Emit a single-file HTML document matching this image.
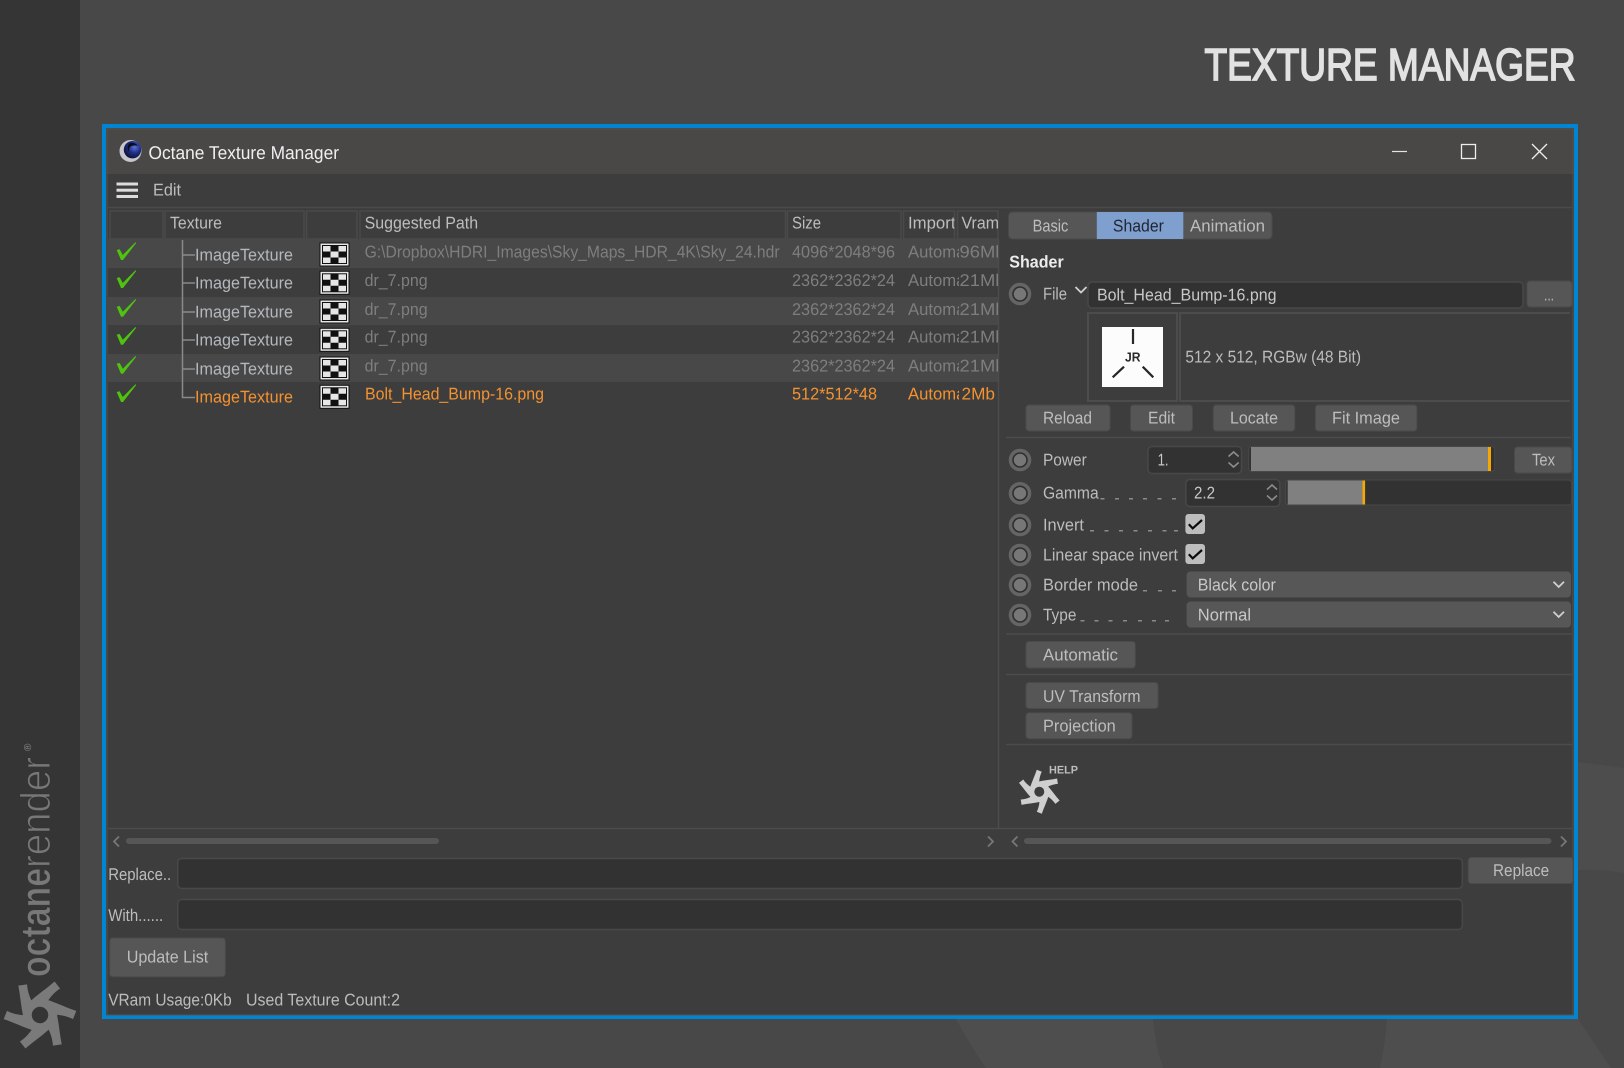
<!DOCTYPE html>
<html><head><meta charset="utf-8"><title>Texture Manager</title>
<style>
html,body{margin:0;padding:0;width:1624px;height:1068px;overflow:hidden;background:#484848}
svg{display:block}
text{font-family:"Liberation Sans",sans-serif;font-size:17px;fill:#bdbdbd;text-rendering:geometricPrecision}
text:not([transform]){transform:translateY(-.7px)}
.g{fill:#7e7e7e}.o{fill:#f39230}.it{fill:#b3b8bd}.l{fill:#bcbcbc}.w{fill:#c8c8c8}
.btn{fill:#565656;stroke:#4a4a4a;stroke-width:1}
.inp{fill:#323232;stroke:#484848;stroke-width:1.5}
.hc{fill:#3d3d3d;stroke:#4a4a4a;stroke-width:1.5}
.ln{fill:none;stroke:#4c4c4c;stroke-width:2}
.ch{fill:none;stroke:#8c8c8c;stroke-width:1.6}
.chw{fill:none;stroke:#d0d0d0;stroke-width:1.8}
.dot{fill:#8a8a8a}
</style></head>
<body>
<svg width="1624" height="1068" viewBox="0 0 1624 1068" xmlns="http://www.w3.org/2000/svg">
<defs>
<clipPath id="ch"><rect x="906" y="205" width="48.5" height="35"/></clipPath>
<clipPath id="ci"><rect x="906" y="240" width="53" height="170"/></clipPath>
<clipPath id="cv"><rect x="959" y="240" width="39" height="170"/></clipPath>
<radialGradient id="sph" cx="0.62" cy="0.35" r="0.7"><stop offset="0" stop-color="#5a74d8"/><stop offset="0.5" stop-color="#1f2d86"/><stop offset="1" stop-color="#0c1030"/></radialGradient>
</defs>
<!-- background -->
<rect width="1624" height="1068" fill="#484848"/>
<rect width="80" height="1068" fill="#353535"/>
<path d="M1578 762L1624 768V873Q1600 869 1578 870Z" fill="#4d4d4d"/>
<path d="M956 1019Q970 1045 986 1068H1163Q1155 1045 1153 1019Z" fill="#4e4e4e"/>
<path d="M1387 1019Q1385 1045 1380 1068H1611L1578 1019Z" fill="#4e4e4e"/>
<!-- sidebar logo -->
<g fill="#7a7a7a" transform="translate(40,1015) scale(1.65) rotate(30)">
<circle r="9.4"/>
<path d="M-9.5-3.5C-7.5-10-4.5-16-2.5-22L2.5-20C.5-16-.5-11 0-7Z"/>
<path d="M-9.5-3.5C-7.5-10-4.5-16-2.5-22L2.5-20C.5-16-.5-11 0-7Z" transform="rotate(60)"/>
<path d="M-9.5-3.5C-7.5-10-4.5-16-2.5-22L2.5-20C.5-16-.5-11 0-7Z" transform="rotate(120)"/>
<path d="M-9.5-3.5C-7.5-10-4.5-16-2.5-22L2.5-20C.5-16-.5-11 0-7Z" transform="rotate(180)"/>
<path d="M-9.5-3.5C-7.5-10-4.5-16-2.5-22L2.5-20C.5-16-.5-11 0-7Z" transform="rotate(240)"/>
<path d="M-9.5-3.5C-7.5-10-4.5-16-2.5-22L2.5-20C.5-16-.5-11 0-7Z" transform="rotate(300)"/>
<circle r="5" fill="#353535"/>
</g>
<text transform="translate(50,977) rotate(-90)" textLength="109" lengthAdjust="spacingAndGlyphs" style="font-size:42px;font-weight:bold;fill:#787878;stroke:#353535;stroke-width:.7">octane</text>
<text transform="translate(50,868) rotate(-90)" textLength="111" lengthAdjust="spacingAndGlyphs" style="font-size:42px;fill:#777;stroke:#353535;stroke-width:1">render</text>
<text transform="translate(31,751) rotate(-90)" style="font-size:10px;fill:#888">®</text>
<!-- heading -->
<text x="1204.5" y="80.7" textLength="371" lengthAdjust="spacingAndGlyphs" style="font-size:45px;fill:#e2e2e2;stroke:#e2e2e2;stroke-width:1.7">TEXTURE MANAGER</text>
<!-- window -->
<rect x="104" y="126" width="1472" height="891" fill="#3d3d3d" stroke="#0085d3" stroke-width="4"/>
<rect x="106" y="128" width="1468" height="46" fill="#4a4846"/>
<path d="M107 129H1573V1015H107Z" fill="none" stroke="#525252" stroke-width="1"/>
<!-- title icon -->
<circle cx="130.5" cy="151" r="11" fill="#c6c6cc"/>
<circle cx="132.5" cy="149.7" r="8.7" fill="url(#sph)"/>
<path d="M129 143.5Q135 141.5 138 146Q134 144.5 130.5 146.5Q128 149 129.5 152.5Q126 148 129 143.5Z" fill="#0a0c20"/>
<text x="148.5" y="159.7" textLength="190.5" lengthAdjust="spacingAndGlyphs" style="font-size:18.5px;fill:#efefef">Octane Texture Manager</text>
<!-- window controls -->
<path d="M1392 151.5H1407" stroke="#e4e4e4" stroke-width="1.2" fill="none"/>
<rect x="1461.5" y="144.5" width="14" height="14" fill="none" stroke="#eee" stroke-width="1.3"/>
<path d="M1532 144L1547 159M1547 144L1532 159" stroke="#eee" stroke-width="1.3" fill="none"/>
<!-- menu -->
<rect x="116.5" y="182.5" width="21.5" height="3" fill="#dcdcdc"/>
<rect x="116.5" y="188.7" width="21.5" height="3" fill="#dcdcdc"/>
<rect x="116.5" y="195" width="21.5" height="3" fill="#dcdcdc"/>
<text x="153" y="196" textLength="28" lengthAdjust="spacingAndGlyphs">Edit</text>
<path d="M107 207.5H1573" stroke="#4a4a4a" stroke-width="1.5"/>
<!-- header -->
<rect x="110" y="211" width="53" height="28" class="hc"/>
<rect x="165" y="211" width="139" height="28" class="hc"/>
<rect x="306.5" y="211" width="50.5" height="28" class="hc"/>
<rect x="360" y="211" width="425.5" height="28" class="hc"/>
<rect x="787.5" y="211" width="113.5" height="28" class="hc"/>
<rect x="903.5" y="211" width="51" height="28" class="hc"/>
<rect x="957.5" y="211" width="40.5" height="28" class="hc"/>
<text x="170" y="229" textLength="52" lengthAdjust="spacingAndGlyphs">Texture</text>
<text x="364.6" y="229" textLength="113.5" lengthAdjust="spacingAndGlyphs">Suggested Path</text>
<text x="792" y="229" textLength="29" lengthAdjust="spacingAndGlyphs">Size</text>
<g clip-path="url(#ch)"><text x="908" y="229" textLength="47.5" lengthAdjust="spacingAndGlyphs">Import</text></g>
<text x="961.5" y="229" textLength="37.5" lengthAdjust="spacingAndGlyphs">Vram</text>
<!-- rows -->
<rect x="108" y="239" width="890" height="29" fill="#484848"/>
<rect x="108" y="297" width="890" height="28" fill="#484848"/>
<rect x="108" y="354" width="890" height="28" fill="#484848"/>
<path d="M998.5 239V828M108 828.5H1573" stroke="#4c4c4c" stroke-width="1.5" fill="none"/>
<!-- checks -->
<g fill="#4fc40f">
<path d="M116.7 250L119.6 249.2L122.8 255L135.5 242.3L136.2 243L123 260H121Z"/>
<path transform="translate(0,28)" d="M116.7 250L119.6 249.2L122.8 255L135.5 242.3L136.2 243L123 260H121Z"/>
<path transform="translate(0,56.7)" d="M116.7 250L119.6 249.2L122.8 255L135.5 242.3L136.2 243L123 260H121Z"/>
<path transform="translate(0,84.7)" d="M116.7 250L119.6 249.2L122.8 255L135.5 242.3L136.2 243L123 260H121Z"/>
<path transform="translate(0,113.7)" d="M116.7 250L119.6 249.2L122.8 255L135.5 242.3L136.2 243L123 260H121Z"/>
<path transform="translate(0,142)" d="M116.7 250L119.6 249.2L122.8 255L135.5 242.3L136.2 243L123 260H121Z"/>
</g>
<!-- tree -->
<path d="M182.5 240V397.5H195M182.5 255H195M182.5 283H195M182.5 312H195M182.5 340H195M182.5 369H195" fill="none" stroke="#8a8a8a" stroke-width="1.5"/>
<text class="it" x="195" y="261" textLength="98" lengthAdjust="spacingAndGlyphs">ImageTexture</text>
<text class="it" x="195" y="289" textLength="98" lengthAdjust="spacingAndGlyphs">ImageTexture</text>
<text class="it" x="195" y="318" textLength="98" lengthAdjust="spacingAndGlyphs">ImageTexture</text>
<text class="it" x="195" y="346.3" textLength="98" lengthAdjust="spacingAndGlyphs">ImageTexture</text>
<text class="it" x="195" y="375" textLength="98" lengthAdjust="spacingAndGlyphs">ImageTexture</text>
<text class="o" x="195" y="403.3" textLength="98" lengthAdjust="spacingAndGlyphs">ImageTexture</text>
<!-- checker icons -->
<g>
<g transform="translate(0,0)"><rect x="320" y="243" width="29" height="23" fill="#e6e6e6" stroke="#111"/><rect x="322.5" y="245.5" width="24" height="18" fill="#e6e6e6" stroke="#111" stroke-width="1"/><path d="M330.5 245.5h8v6h-8zM322.5 251.5h8v6h-8zM338.5 251.5h8v6h-8zM330.5 257.5h8v6h-8z" fill="#111"/></g>
<g transform="translate(0,28.3)"><rect x="320" y="243" width="29" height="23" fill="#e6e6e6" stroke="#111"/><rect x="322.5" y="245.5" width="24" height="18" fill="#e6e6e6" stroke="#111" stroke-width="1"/><path d="M330.5 245.5h8v6h-8zM322.5 251.5h8v6h-8zM338.5 251.5h8v6h-8zM330.5 257.5h8v6h-8z" fill="#111"/></g>
<g transform="translate(0,57)"><rect x="320" y="243" width="29" height="23" fill="#e6e6e6" stroke="#111"/><rect x="322.5" y="245.5" width="24" height="18" fill="#e6e6e6" stroke="#111" stroke-width="1"/><path d="M330.5 245.5h8v6h-8zM322.5 251.5h8v6h-8zM338.5 251.5h8v6h-8zM330.5 257.5h8v6h-8z" fill="#111"/></g>
<g transform="translate(0,85.3)"><rect x="320" y="243" width="29" height="23" fill="#e6e6e6" stroke="#111"/><rect x="322.5" y="245.5" width="24" height="18" fill="#e6e6e6" stroke="#111" stroke-width="1"/><path d="M330.5 245.5h8v6h-8zM322.5 251.5h8v6h-8zM338.5 251.5h8v6h-8zM330.5 257.5h8v6h-8z" fill="#111"/></g>
<g transform="translate(0,114)"><rect x="320" y="243" width="29" height="23" fill="#e6e6e6" stroke="#111"/><rect x="322.5" y="245.5" width="24" height="18" fill="#e6e6e6" stroke="#111" stroke-width="1"/><path d="M330.5 245.5h8v6h-8zM322.5 251.5h8v6h-8zM338.5 251.5h8v6h-8zM330.5 257.5h8v6h-8z" fill="#111"/></g>
<g transform="translate(0,142.3)"><rect x="320" y="243" width="29" height="23" fill="#e6e6e6" stroke="#111"/><rect x="322.5" y="245.5" width="24" height="18" fill="#e6e6e6" stroke="#111" stroke-width="1"/><path d="M330.5 245.5h8v6h-8zM322.5 251.5h8v6h-8zM338.5 251.5h8v6h-8zM330.5 257.5h8v6h-8z" fill="#111"/></g>
</g>
<!-- path column -->
<text class="g" x="364.6" y="258" textLength="415" lengthAdjust="spacingAndGlyphs">G:\Dropbox\HDRI_Images\Sky_Maps_HDR_4K\Sky_24.hdr</text>
<text class="g" x="364.6" y="286.7" textLength="63" lengthAdjust="spacingAndGlyphs">dr_7.png</text>
<text class="g" x="364.6" y="315.7" textLength="63" lengthAdjust="spacingAndGlyphs">dr_7.png</text>
<text class="g" x="364.6" y="343.3" textLength="63" lengthAdjust="spacingAndGlyphs">dr_7.png</text>
<text class="g" x="364.6" y="372.3" textLength="63" lengthAdjust="spacingAndGlyphs">dr_7.png</text>
<text class="o" x="365" y="400" textLength="179" lengthAdjust="spacingAndGlyphs">Bolt_Head_Bump-16.png</text>
<!-- size -->
<text class="g" x="792" y="258" textLength="103" lengthAdjust="spacingAndGlyphs">4096*2048*96</text>
<text class="g" x="792" y="286.7" textLength="103" lengthAdjust="spacingAndGlyphs">2362*2362*24</text>
<text class="g" x="792" y="315.7" textLength="103" lengthAdjust="spacingAndGlyphs">2362*2362*24</text>
<text class="g" x="792" y="343.3" textLength="103" lengthAdjust="spacingAndGlyphs">2362*2362*24</text>
<text class="g" x="792" y="372.3" textLength="103" lengthAdjust="spacingAndGlyphs">2362*2362*24</text>
<text class="o" x="792" y="400" textLength="85" lengthAdjust="spacingAndGlyphs">512*512*48</text>
<!-- import -->
<g clip-path="url(#ci)">
<text class="g" x="908" y="258" textLength="74" lengthAdjust="spacingAndGlyphs">Automatic</text>
<text class="g" x="908" y="286.7" textLength="74" lengthAdjust="spacingAndGlyphs">Automatic</text>
<text class="g" x="908" y="315.7" textLength="74" lengthAdjust="spacingAndGlyphs">Automatic</text>
<text class="g" x="908" y="343.3" textLength="74" lengthAdjust="spacingAndGlyphs">Automatic</text>
<text class="g" x="908" y="372.3" textLength="74" lengthAdjust="spacingAndGlyphs">Automatic</text>
<text class="o" x="908" y="400" textLength="74" lengthAdjust="spacingAndGlyphs">Automatic</text>
</g>
<!-- vram -->
<g clip-path="url(#cv)">
<text class="g" x="959.5" y="258" textLength="46" lengthAdjust="spacingAndGlyphs">96Mb</text>
<text class="g" x="959.5" y="286.7" textLength="46" lengthAdjust="spacingAndGlyphs">21Mb</text>
<text class="g" x="959.5" y="315.7" textLength="46" lengthAdjust="spacingAndGlyphs">21Mb</text>
<text class="g" x="959.5" y="343.3" textLength="46" lengthAdjust="spacingAndGlyphs">21Mb</text>
<text class="g" x="959.5" y="372.3" textLength="46" lengthAdjust="spacingAndGlyphs">21Mb</text>
<text class="o" x="961.5" y="400" textLength="33.5" lengthAdjust="spacingAndGlyphs">2Mb</text>
</g>
<!-- tabs -->
<rect x="1008.5" y="212" width="263.5" height="27" rx="4" fill="#565656" stroke="#4a4a4a"/>
<rect x="1096.8" y="212" width="86.5" height="27" fill="#7f9fcf"/>
<text x="1032.6" y="232" textLength="35.7" lengthAdjust="spacingAndGlyphs">Basic</text>
<text x="1112.9" y="232" textLength="51" lengthAdjust="spacingAndGlyphs" style="fill:#1f2630">Shader</text>
<text x="1190" y="232" textLength="75" lengthAdjust="spacingAndGlyphs">Animation</text>
<text x="1009.3" y="268.3" textLength="54.4" lengthAdjust="spacingAndGlyphs" style="font-weight:bold;fill:#ececec">Shader</text>
<!-- radios -->
<g fill="#777" stroke="#2f2f2f" stroke-width="1.6">
<g><circle cx="1020" cy="294" r="11.3" fill="#656565" stroke="none"/><circle cx="1020" cy="294" r="7"/></g>
<g><circle cx="1020" cy="460" r="11.3" fill="#656565" stroke="none"/><circle cx="1020" cy="460" r="7"/></g>
<g><circle cx="1020" cy="493.3" r="11.3" fill="#656565" stroke="none"/><circle cx="1020" cy="493.3" r="7"/></g>
<g><circle cx="1020" cy="525" r="11.3" fill="#656565" stroke="none"/><circle cx="1020" cy="525" r="7"/></g>
<g><circle cx="1020" cy="555" r="11.3" fill="#656565" stroke="none"/><circle cx="1020" cy="555" r="7"/></g>
<g><circle cx="1020" cy="585" r="11.3" fill="#656565" stroke="none"/><circle cx="1020" cy="585" r="7"/></g>
<g><circle cx="1020" cy="615" r="11.3" fill="#656565" stroke="none"/><circle cx="1020" cy="615" r="7"/></g>
</g>
<!-- file row -->
<text class="l" x="1043" y="300" textLength="24" lengthAdjust="spacingAndGlyphs">File</text>
<path d="M1075.5 287L1081 292.5L1086.5 287" class="chw"/>
<rect x="1088" y="282" width="435" height="26" rx="4" class="inp"/>
<text class="w" x="1097" y="301" textLength="179.5" lengthAdjust="spacingAndGlyphs">Bolt_Head_Bump-16.png</text>
<rect x="1527" y="281" width="45" height="26" rx="3" class="btn"/>
<text x="1544" y="301" textLength="10" lengthAdjust="spacingAndGlyphs">...</text>
<rect x="1088" y="313" width="89" height="88" class="ln"/>
<path d="M1570 313H1180V401H1570" class="ln"/>
<rect x="1102" y="327" width="61" height="60" fill="#fcfcfc"/>
<path d="M1133 329V344M1112.7 377.3L1124 366.7M1142.7 366.7L1153.3 377.3" stroke="#262626" stroke-width="2.2" fill="none"/>
<text x="1125" y="362" textLength="15.5" lengthAdjust="spacingAndGlyphs" style="font-size:13px;font-weight:bold;fill:#2a2a2a">JR</text>
<text class="l" x="1185.4" y="363.3" textLength="175.6" lengthAdjust="spacingAndGlyphs">512 x 512, RGBw (48 Bit)</text>
<!-- buttons -->
<rect x="1026" y="405" width="84" height="26" rx="3" class="btn"/>
<rect x="1130.5" y="405" width="62" height="26" rx="3" class="btn"/>
<rect x="1213.3" y="405" width="81.5" height="26" rx="3" class="btn"/>
<rect x="1315.4" y="405" width="101.5" height="26" rx="3" class="btn"/>
<text x="1043" y="424" textLength="49" lengthAdjust="spacingAndGlyphs">Reload</text>
<text x="1148" y="424" textLength="27" lengthAdjust="spacingAndGlyphs">Edit</text>
<text x="1230" y="424" textLength="48" lengthAdjust="spacingAndGlyphs">Locate</text>
<text x="1332" y="424" textLength="68" lengthAdjust="spacingAndGlyphs">Fit Image</text>
<path d="M1006 437.5H1571M1006 634H1571.8M1006 674.5H1571.8M1006 744.5H1571.8" stroke="#4c4c4c" stroke-width="1.5" fill="none"/>
<!-- power -->
<text class="l" x="1043" y="466" textLength="43.7" lengthAdjust="spacingAndGlyphs">Power</text>
<rect x="1148" y="446.5" width="93.5" height="27" rx="4" class="inp"/>
<text class="w" x="1157.6" y="466" textLength="11" lengthAdjust="spacingAndGlyphs">1.</text>
<path d="M1228.5 456.5L1233.6 452L1238.7 456.5M1228.5 462.5L1233.6 467L1238.7 462.5" class="ch"/>
<rect x="1248.7" y="446.5" width="246" height="25" rx="3" fill="#323232" stroke="#484848"/>
<rect x="1251" y="447" width="237" height="24" fill="#808080"/>
<rect x="1488" y="447" width="3" height="24" fill="#f5a800"/>
<rect x="1514.5" y="447" width="57.3" height="26" rx="3" class="btn"/>
<text x="1532" y="466" textLength="23" lengthAdjust="spacingAndGlyphs">Tex</text>
<!-- gamma -->
<text class="l" x="1043" y="499" textLength="55.7" lengthAdjust="spacingAndGlyphs">Gamma</text>
<g class="dot"><rect x="1100.5" y="498" width="4" height="1.5"/><rect x="1115" y="498" width="4" height="1.5"/><rect x="1129" y="498" width="4" height="1.5"/><rect x="1143" y="498" width="4" height="1.5"/><rect x="1157.5" y="498" width="4" height="1.5"/><rect x="1172" y="498" width="4" height="1.5"/></g>
<rect x="1185.8" y="479.5" width="94" height="27" rx="4" class="inp"/>
<text class="w" x="1194" y="499" textLength="21" lengthAdjust="spacingAndGlyphs">2.2</text>
<path d="M1267 489.5L1272 485L1277 489.5M1267 495.5L1272 500L1277 495.5" class="ch"/>
<rect x="1285.7" y="480" width="286" height="25" rx="3" fill="#323232" stroke="#484848"/>
<rect x="1287.7" y="480.5" width="74.8" height="24" fill="#808080"/>
<rect x="1362.5" y="480.5" width="2.6" height="24" fill="#f5a800"/>
<!-- invert -->
<text class="l" x="1043" y="531" textLength="41" lengthAdjust="spacingAndGlyphs">Invert</text>
<g class="dot"><rect x="1090" y="530" width="4" height="1.5"/><rect x="1104.5" y="530" width="4" height="1.5"/><rect x="1119" y="530" width="4" height="1.5"/><rect x="1133.5" y="530" width="4" height="1.5"/><rect x="1148" y="530" width="4" height="1.5"/><rect x="1162.5" y="530" width="4" height="1.5"/><rect x="1174" y="530" width="4" height="1.5"/></g>
<rect x="1185.4" y="514" width="19.6" height="20" rx="3" fill="#bdbdbd"/>
<path d="M1188.8 524.3L1192.7 528.4L1202 520" fill="none" stroke="#0a0a0a" stroke-width="2.2"/>
<text class="l" x="1043" y="561" textLength="135" lengthAdjust="spacingAndGlyphs">Linear space invert</text>
<rect x="1185.4" y="544" width="19.6" height="20" rx="3" fill="#bdbdbd"/>
<path d="M1188.8 554.3L1192.7 558.4L1202 550" fill="none" stroke="#0a0a0a" stroke-width="2.2"/>
<!-- border -->
<text class="l" x="1043" y="591" textLength="95" lengthAdjust="spacingAndGlyphs">Border mode</text>
<g class="dot"><rect x="1143" y="590" width="4" height="1.5"/><rect x="1158" y="590" width="4" height="1.5"/><rect x="1172" y="590" width="4" height="1.5"/></g>
<rect x="1186.6" y="571.5" width="384.4" height="26" rx="4" fill="#575757"/>
<text class="w" x="1197.8" y="591" textLength="78" lengthAdjust="spacingAndGlyphs">Black color</text>
<path d="M1553.5 581.7L1558.7 587L1564 581.7" class="chw"/>
<text class="l" x="1043" y="621" textLength="33.4" lengthAdjust="spacingAndGlyphs">Type</text>
<g class="dot"><rect x="1080.5" y="620" width="4" height="1.5"/><rect x="1094.5" y="620" width="4" height="1.5"/><rect x="1108.5" y="620" width="4" height="1.5"/><rect x="1123" y="620" width="4" height="1.5"/><rect x="1138" y="620" width="4" height="1.5"/><rect x="1152" y="620" width="4" height="1.5"/><rect x="1165" y="620" width="4" height="1.5"/></g>
<rect x="1186.6" y="601.5" width="384.4" height="26" rx="4" fill="#575757"/>
<text class="w" x="1197.8" y="621" textLength="53.2" lengthAdjust="spacingAndGlyphs">Normal</text>
<path d="M1553.5 611.7L1558.7 617L1564 611.7" class="chw"/>
<!-- more buttons -->
<rect x="1026" y="641.5" width="109.3" height="26.5" rx="3" class="btn"/>
<text x="1043" y="661" textLength="75" lengthAdjust="spacingAndGlyphs">Automatic</text>
<rect x="1026" y="682.5" width="132" height="26" rx="3" class="btn"/>
<text x="1043" y="702.7" textLength="97.5" lengthAdjust="spacingAndGlyphs">UV Transform</text>
<rect x="1026" y="712.7" width="106" height="26" rx="3" class="btn"/>
<text x="1043" y="732" textLength="72.8" lengthAdjust="spacingAndGlyphs">Projection</text>
<!-- help icon -->
<g fill="#cfcfcf" transform="translate(1039.3,791.7)">
<circle r="9.4"/>
<path d="M-9.5-3.5C-7.5-10-4.5-16-2.5-22L2.5-20C.5-16-.5-11 0-7Z"/>
<path d="M-9.5-3.5C-7.5-10-4.5-16-2.5-22L2.5-20C.5-16-.5-11 0-7Z" transform="rotate(60)"/>
<path d="M-9.5-3.5C-7.5-10-4.5-16-2.5-22L2.5-20C.5-16-.5-11 0-7Z" transform="rotate(120)"/>
<path d="M-9.5-3.5C-7.5-10-4.5-16-2.5-22L2.5-20C.5-16-.5-11 0-7Z" transform="rotate(180)"/>
<path d="M-9.5-3.5C-7.5-10-4.5-16-2.5-22L2.5-20C.5-16-.5-11 0-7Z" transform="rotate(240)"/>
<path d="M-9.5-3.5C-7.5-10-4.5-16-2.5-22L2.5-20C.5-16-.5-11 0-7Z" transform="rotate(300)"/>
<circle r="5" fill="#3d3d3d"/>
</g>
<text x="1049" y="774" textLength="29" lengthAdjust="spacingAndGlyphs" style="font-size:11px;font-weight:bold;fill:#bdbdbd">HELP</text>
<!-- scrollbars -->
<path d="M119 836.5L114 841.5L119 846.5M988 836.5L993 841.5L988 846.5M1017.5 836.5L1012.5 841.5L1017.5 846.5M1561 836.5L1566 841.5L1561 846.5" fill="none" stroke="#777" stroke-width="1.8"/>
<rect x="126" y="838" width="313" height="6" rx="3" fill="#565656"/>
<rect x="1024" y="838" width="527.5" height="6" rx="3" fill="#565656"/>
<!-- bottom -->
<text class="l" x="108.2" y="880.7" textLength="63" lengthAdjust="spacingAndGlyphs">Replace..</text>
<rect x="177.7" y="858.5" width="1284.6" height="30" rx="4" class="inp"/>
<rect x="1468.3" y="857.5" width="105" height="26" rx="3" class="btn"/>
<text x="1493" y="876.7" textLength="56.2" lengthAdjust="spacingAndGlyphs">Replace</text>
<text class="l" x="108.2" y="921.7" textLength="55" lengthAdjust="spacingAndGlyphs">With......</text>
<rect x="177.7" y="899.5" width="1284.6" height="30" rx="4" class="inp"/>
<rect x="109.7" y="938" width="115.6" height="38.7" rx="3" class="btn"/>
<text x="126.7" y="963.3" textLength="81.6" lengthAdjust="spacingAndGlyphs">Update List</text>
<text class="l" x="108.2" y="1006" textLength="123.5" lengthAdjust="spacingAndGlyphs">VRam Usage:0Kb</text>
<text class="l" x="246" y="1006" textLength="154" lengthAdjust="spacingAndGlyphs">Used Texture Count:2</text>
</svg>
</body></html>
